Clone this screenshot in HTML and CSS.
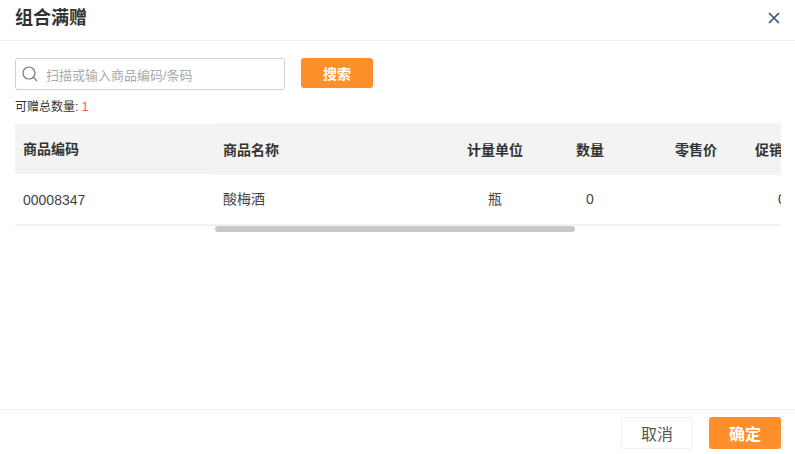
FILE: index.html
```html
<!DOCTYPE html>
<html lang="zh-CN">
<head>
<meta charset="utf-8">
<title>组合满赠</title>
<link rel="stylesheet" href="styles.css">
</head>
<body>
<div class="dialog">
  <header class="head">
    <h1 class="title">组合满赠</h1>
    <svg class="close" width="14" height="14" viewBox="0 0 14 14"><path d="M2 2l10 10M12 2L2 12" stroke="#3f5272" stroke-width="1.7" fill="none"/></svg>
  </header>
  <main class="body">
    <div class="search">
      <div class="input">
        <svg class="lens" width="18" height="18" viewBox="0 0 18 18"><circle cx="8" cy="8" r="6" stroke="#777" stroke-width="1.2" fill="none"/><path d="M12.4 12.4l3.6 3.6" stroke="#777" stroke-width="1.2" fill="none"/></svg>
        <span class="placeholder">扫描或输入商品编码/条码</span>
      </div>
      <button class="btn primary small">搜索</button>
    </div>
    <p class="count">可赠总数量: <span class="red">1</span></p>
    <div class="table">
      <div class="fixed">
        <div class="th cell left">商品编码</div>
        <div class="td cell left">00008347</div>
      </div>
      <div class="scroll">
        <div class="hrow">
          <div class="cell c-name left">商品名称</div>
          <div class="cell c-unit center">计量单位</div>
          <div class="cell c-qty center">数量</div>
          <div class="cell c-price right">零售价</div>
          <div class="cell c-promo right">促销价格</div>
        </div>
        <div class="drow">
          <div class="cell c-name left">酸梅酒</div>
          <div class="cell c-unit center">瓶</div>
          <div class="cell c-qty center">0</div>
          <div class="cell c-price right"></div>
          <div class="cell c-promo left zero">0</div>
        </div>
      </div>
      <div class="thumb"></div>
    </div>
  </main>
  <footer class="foot">
    <button class="btn ghost">取消</button>
    <button class="btn primary">确定</button>
  </footer>
</div>
</body>
</html>
```
FILE: styles.css
```css
* { box-sizing: border-box; }
html, body { margin: 0; height: 100%; }
body {
  background: #fff;
  font-family: "Liberation Sans", "Noto Sans CJK SC", sans-serif;
  color: #333;
  overflow: hidden;
}
.dialog { display: flex; flex-direction: column; height: 454px; }
.head {
  height: 41px;
  padding: 0 14px 5px 15px;
  display: flex;
  align-items: center;
  justify-content: space-between;
  border-bottom: 1px solid #f0f0f0;
}
.title { margin: 0; font-size: 18px; font-weight: 700; color: #333; line-height: 24px; }
.body { flex: 1; padding: 17px 14px 0 15px; }
.search { display: flex; align-items: flex-start; gap: 16px; height: 32px; }
.input {
  width: 270px;
  height: 32px;
  border: 1px solid #d0d0d0;
  border-radius: 3px;
  display: flex;
  align-items: center;
  padding-left: 5px;
  gap: 7px;
}
.lens { flex: none; }
.placeholder { font-size: 13px; color: #aaa; }
.btn {
  font-family: inherit;
  border-radius: 3px;
  font-size: 16px;
  font-weight: 700;
  cursor: pointer;
  width: 72px;
  height: 32px;
  padding: 0;
}
.primary { background: #ff8f2b; color: #fff; border: 0; }
.small { height: 30px; font-size: 14px; }
.ghost { background: #fff; color: #555; border: 1px solid #f0f0f0; font-weight: 400; }
.count { margin: 8px 0 0; font-size: 12px; line-height: 18px; height: 18px; color: #333; }
.red { color: #f55; }
.table {
  position: relative;
  display: flex;
  margin-top: 8px;
  height: 108px;
  width: 766px;
}
.fixed { width: 200px; flex: none; }
.scroll { flex: 1; overflow: hidden; margin-top: -1px; }
.cell { font-size: 14px; padding: 0 8px; white-space: nowrap; }
.th {
  height: 50px;
  line-height: 50px;
  background: #f3f3f3;
  font-weight: 700;
  color: #333;
}
.td {
  height: 52px;
  line-height: 49px;
  padding-top: 2px;
  border-bottom: 2px solid #f2f2f2;
  color: #444;
}
.hrow, .drow { display: flex; width: 800px; }
.hrow { height: 52px; background: #f3f3f3; font-weight: 700; align-items: center; }
.drow { height: 51px; padding-bottom: 2px; border-bottom: 2px solid #f2f2f2; align-items: center; color: #444; }
.drow .cell { line-height: 20px; height: 20px; }
.c-name { width: 230px; flex: none; }
.c-unit { width: 100px; flex: none; }
.c-qty { width: 90px; flex: none; }
.c-price { width: 90px; flex: none; }
.c-promo { width: 120px; flex: none; }
.left { text-align: left; }
.center { text-align: center; }
.right { text-align: right; }
.c-promo.right { text-align: left; padding-left: 30px; }
.c-promo.zero { padding-left: 53px; }
.thumb {
  position: absolute;
  left: 200px;
  top: 102px;
  width: 360px;
  height: 6px;
  border-radius: 3px;
  background: #c8c7cc;
}
.foot {
  height: 45px;
  border-top: 1px solid #f0f0f0;
  display: flex;
  justify-content: flex-end;
  gap: 16px;
  padding: 7px 14px 0 0;
}
```
